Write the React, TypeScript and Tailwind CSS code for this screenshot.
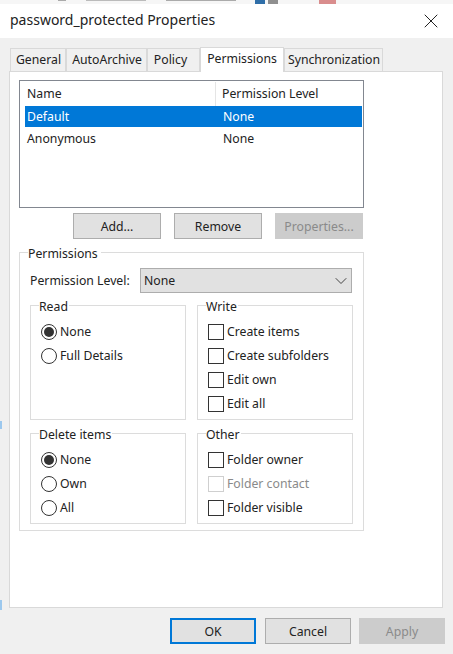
import React from 'react';
import { ChevronDown, X } from 'lucide-react';

const tabs = [
  { label: 'General', width: 'w-[56px]', extra: 'pl-[1px]' },
  { label: 'AutoArchive', width: 'w-[81px]', extra: 'pl-[1px]' },
  { label: 'Policy', width: 'w-[53px]', extra: 'pr-[6px]' },
];

const Button = ({ label, disabled, primary, width = 'w-[88px]', extra = '' }: { label: string; disabled?: boolean; primary?: boolean; width?: string; extra?: string }) => (
  <button
    className={`${width} ${extra} h-[26px] pt-[2px] flex items-center justify-center text-[12.25px] border ${
      disabled
        ? 'bg-[#cccccc] border-[#cccccc] text-[#8a8a8a]'
        : primary
          ? 'bg-[#e1e1e1] border-2 border-[#0078d7] text-[#222]'
          : 'bg-[#e1e1e1] border-[#adadad] text-[#222]'
    }`}
  >
    {label}
  </button>
);

const Group = ({ title, height, children }: { title: string; height: string; children?: React.ReactNode }) => (
  <div className={`relative w-[156px] ${height} border border-[#dcdcdc]`}>
    <span className="absolute -top-[9px] left-[8px] bg-white pr-[1px] text-[12.25px] leading-[20px] text-[#222]">{title}</span>
    <div className="flex flex-col gap-[4px] pt-[16px] pl-[10px]">{children}</div>
  </div>
);

const Radio = ({ label, checked }: { label: string; checked?: boolean }) => (
  <div className="flex items-center h-[20px] text-[12.25px] text-[#222]">
    <span className="w-[16px] h-[16px] rounded-full border border-[#333] flex items-center justify-center shrink-0 mr-[3px]">
      {checked && <span className="w-[10px] h-[10px] rounded-full bg-[#333]" />}
    </span>
    {label}
  </div>
);

const Check = ({ label, disabled }: { label: string; disabled?: boolean }) => (
  <div className={`flex items-center h-[20px] text-[12.25px] ${disabled ? 'text-[#8a8a8a]' : 'text-[#222]'}`}>
    <span className={`w-[16px] h-[16px] border shrink-0 mr-[3px] ${disabled ? 'border-[#cfcfcf]' : 'border-[#333]'}`} />
    {label}
  </div>
);

export default function App() {
  return (
    <div
      className="relative w-[453px] h-[654px] overflow-hidden flex flex-col bg-[#f0f0f0]"
      style={{ fontFamily: '"Noto Sans", "Open Sans", sans-serif' }}
    >
      {/* bit of the window behind the dialog */}
      <div className="h-[4px] flex bg-[#f6f6f6]">
        <span className="ml-[58px] w-[8px] h-[1px] bg-[#aaa]" />
        <span className="ml-[20px] w-[60px] h-[1px] bg-[#bbb]" />
        <span className="ml-[20px] w-[70px] h-[1px] bg-[#aaa]" />
        <span className="ml-[19px] w-[10px] bg-[#2f6ea8]" />
        <span className="ml-[3px] w-[10px] bg-[#8f8f8f]" />
        <span className="ml-[41px] w-[17px] bg-[#d98d8d]" />
      </div>
      <span className="absolute left-0 top-[421px] w-[2px] h-[8px] bg-[#9cc8ee]" />
      <span className="absolute left-0 top-[600px] w-[2px] h-[10px] bg-[#9cc8ee]" />

      <div className="h-[34px] shrink-0 bg-white flex items-center justify-between pl-[10px] pr-[10px]">
        <span className="text-[14px] leading-[32px] pb-[2px] text-[#222]">password_protected Properties</span>
        <X className="w-[24px] h-[24px] text-[#222]" strokeWidth={1} />
      </div>

      <div className="flex items-end h-[33px] shrink-0 pl-[10px] relative z-10">
        {tabs.map(tab => (
          <div
            key={tab.label}
            className={`${tab.width} ${tab.extra} h-[23px] pt-[1px] bg-[#f0f0f0] border border-[#d9d9d9] border-b-0 flex items-center justify-center text-[12.25px] text-[#222]`}
          >
            {tab.label}
          </div>
        ))}
        <div className="w-[84px] h-[25px] -mb-[1px] bg-white border border-[#d9d9d9] border-b-0 flex items-start justify-center text-[12.25px] leading-[22px] text-[#222]">
          Permissions
        </div>
        <div className="w-[99px] h-[23px] pt-[1px] pl-[1px] bg-[#f0f0f0] border border-[#d9d9d9] border-b-0 flex items-center justify-center text-[12.25px] text-[#222]">
          Synchronization
        </div>
      </div>

      <div className="ml-[9px] w-[434px] h-[537px] shrink-0 bg-white border border-[#d9d9d9] pt-[8px] pl-[9px]">
        <div className="w-[345px] h-[128px] border border-[#828790] pl-[5px] pr-[1px] pt-[1px] text-[12.25px] text-[#222]">
          <div className="flex h-[24px] items-center">
            <span className="w-[191px] pl-[2px] pt-[1px] h-full flex items-center border-r border-[#e5e5e5]">Name</span>
            <span className="pl-[6px] pt-[1px]">Permission Level</span>
          </div>
          <div className="flex h-[21px] pt-[2px] items-center bg-[#0078d7] text-white">
            <span className="w-[198px] pl-[2px]">Default</span>
            <span>None</span>
          </div>
          <div className="flex h-[21px] pt-[2px] mt-[1px] items-center">
            <span className="w-[198px] pl-[2px]">Anonymous</span>
            <span>None</span>
          </div>
        </div>

        <div className="flex gap-[13px] mt-[5px] ml-[54px]">
          <Button label="Add..." />
          <Button label="Remove" />
          <Button label="Properties..." disabled />
        </div>

        <div className="relative w-[345px] h-[279px] mt-[13px] border border-[#dcdcdc] pl-[10px]">
          <span className="absolute -top-[9px] left-[8px] bg-white pr-[3px] text-[12.25px] leading-[20px] text-[#222]">Permissions</span>
          <div className="flex items-center h-[25px] mt-[15px] text-[12.25px] text-[#222]">
            <span className="w-[110px] pt-[2px] shrink-0">Permission Level:</span>
            <div className="w-[212px] h-full bg-[#e1e1e1] border border-[#adadad] flex items-center justify-between pl-[3px]">
              <span className="pt-[2px]">None</span>
              <ChevronDown className="w-[20px] h-[20px] text-[#444]" strokeWidth={1.2} />
            </div>
          </div>

          <div className="grid grid-cols-[156px_156px] gap-x-[11px] gap-y-[13px] mt-[12px]">
            <Group title="Read" height="h-[115px]">
              <Radio label="None" checked />
              <Radio label="Full Details" />
            </Group>
            <Group title="Write" height="h-[115px]">
              <Check label="Create items" />
              <Check label="Create subfolders" />
              <Check label="Edit own" />
              <Check label="Edit all" />
            </Group>
            <Group title="Delete items" height="h-[91px]">
              <Radio label="None" checked />
              <Radio label="Own" />
              <Radio label="All" />
            </Group>
            <Group title="Other" height="h-[91px]">
              <Check label="Folder owner" />
              <Check label="Folder contact" disabled />
              <Check label="Folder visible" />
            </Group>
          </div>
        </div>
      </div>

      <div className="flex mt-[10px] ml-[170px] gap-[9px]">
        <Button label="OK" primary width="w-[86px]" />
        <Button label="Cancel" width="w-[86px]" />
        <Button label="Apply" disabled width="w-[86px]" extra="-ml-[1px]" />
      </div>
    </div>
  );
}
